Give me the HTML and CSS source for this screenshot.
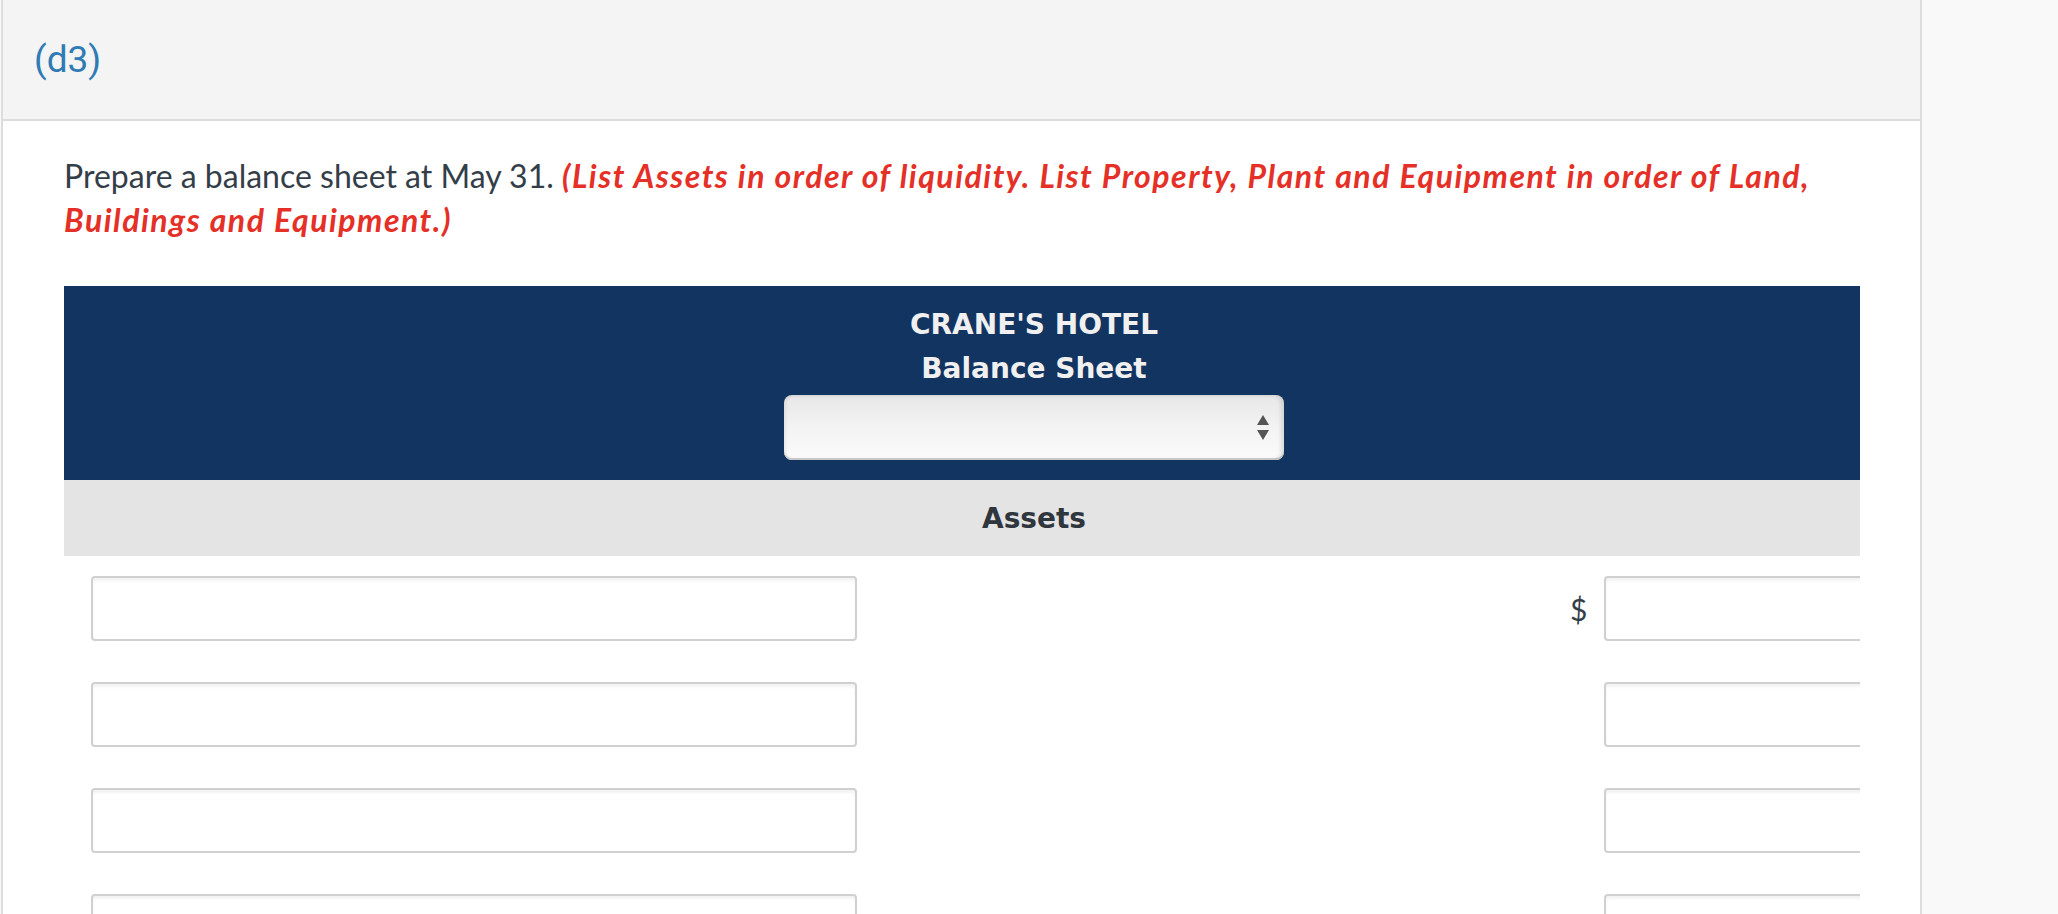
FILE: index.html
```html
<!DOCTYPE html>
<html lang="en">
<head>
<meta charset="utf-8">
<title>(d3) Balance Sheet</title>
<link rel="stylesheet" href="styles.css">
</head>
<body>
<div class="panel">
  <div class="panel-head">
    <span class="part-label">(d3)</span>
  </div>
  <div class="panel-body">
    <p class="prompt">Prepare a balance sheet at May 31. <em class="hint">(List Assets in order of liquidity. List Property, Plant and Equipment in order of Land, Buildings and Equipment.)</em></p>
    <div class="sheet-clip">
      <div class="sheet">
        <div class="sheet-head">
          <div class="sheet-title">CRANE'S HOTEL</div>
          <div class="sheet-title">Balance Sheet</div>
          <div class="select-wrap">
            <select class="date-select" aria-label="Date"><option></option></select>
            <svg class="select-arrows" width="12" height="26" viewBox="0 0 12 26" aria-hidden="true">
              <path d="M6 0 L12 10 L0 10 Z" fill="#555"/>
              <path d="M0 15 L12 15 L6 25 Z" fill="#555"/>
            </svg>
          </div>
        </div>
        <div class="section-row">Assets</div>
        <div class="line-row">
          <input class="field field-label" type="text">
          <span class="currency">$</span>
          <input class="field field-amount" type="text">
        </div>
        <div class="line-row">
          <input class="field field-label" type="text">
          <span class="currency"></span>
          <input class="field field-amount" type="text">
        </div>
        <div class="line-row">
          <input class="field field-label" type="text">
          <span class="currency"></span>
          <input class="field field-amount" type="text">
        </div>
        <div class="line-row">
          <input class="field field-label" type="text">
          <span class="currency"></span>
          <input class="field field-amount" type="text">
        </div>
        <div class="line-row">
          <input class="field field-label" type="text">
          <span class="currency"></span>
          <input class="field field-amount" type="text">
        </div>
      </div>
    </div>
  </div>
</div>
</body>
</html>
```
FILE: styles.css
```css
html, body {
  margin: 0;
  padding: 0;
}
body {
  background: #f9f9f9;
  font-family: Lato, "Noto Sans", sans-serif;
  color: #343e48;
  overflow: hidden;
}
.panel {
  margin-left: 1px;
  width: 1917px;
  background: #fff;
  border-left: 2px solid #dddddd;
  border-right: 2px solid #dddddd;
  min-height: 914px;
}
.panel-head {
  height: 119px;
  background: #f4f4f4;
  border-bottom: 2px solid #dddddd;
  display: flex;
  align-items: center;
  padding-left: 31px;
}
.part-label {
  font-family: Roboto, "Liberation Sans", sans-serif;
  font-weight: 400;
  font-size: 37px;
  color: #2f7bb3;
  line-height: 1;
}
.panel-body {
  padding: 33px 60px 0 61px;
}
.prompt {
  margin: 0;
  font-size: 32px;
  line-height: 44px;
}
.hint {
  font-style: italic;
  font-weight: 700;
  color: #e53027;
  letter-spacing: 1.5px;
}
.sheet-clip {
  margin-top: 44px;
  overflow: hidden;
}
.sheet {
  width: 1940px;
}
.sheet-head {
  background: #123460;
  padding: 17px 0 20px;
  display: flex;
  flex-direction: column;
  align-items: center;
}
.sheet-title {
  font-family: "DejaVu Sans", sans-serif;
  font-weight: 700;
  font-size: 28px;
  line-height: 44px;
  color: #f0f0f0;
}
.select-wrap {
  position: relative;
  margin-top: 4px;
  width: 500px;
  height: 65px;
}
.date-select {
  -webkit-appearance: none;
  appearance: none;
  width: 500px;
  height: 65px;
  border: none;
  border-radius: 8px;
  background: linear-gradient(#e7e7e7, #f3f3f3 50%, #fbfbfb);
  box-shadow: inset -3px 0 4px rgba(0,0,0,0.12), inset 0 -2px 0 #cfcfcf, inset 2px 0 3px rgba(0,0,0,0.06);
  font-size: 24px;
  margin: 0;
  padding: 0;
  display: block;
}
.select-arrows {
  position: absolute;
  right: 15px;
  top: 20px;
  pointer-events: none;
}
.section-row {
  background: #e4e4e4;
  height: 76px;
  line-height: 78px;
  text-align: center;
  font-family: "DejaVu Sans", sans-serif;
  font-weight: 700;
  font-size: 28px;
  color: #30363d;
}
.line-row {
  display: flex;
  align-items: center;
  padding: 20px 14px 21px 27px;
}
.field {
  box-sizing: border-box;
  height: 65px;
  margin: 0;
  border: 2px solid #d0d0d0;
  border-radius: 4px;
  background: #fff;
  box-shadow: inset 0 3px 3px rgba(0,0,0,0.05);
  font-family: Lato, sans-serif;
  font-size: 24px;
  padding: 0 10px;
}
.field-label {
  width: 766px;
}
.currency {
  margin-left: auto;
  width: 34px;
  box-sizing: border-box;
  padding-right: 17px;
  text-align: right;
  font-size: 30px;
  line-height: 1;
  color: #343e48;
}
.field-amount {
  width: 386px;
}
```
